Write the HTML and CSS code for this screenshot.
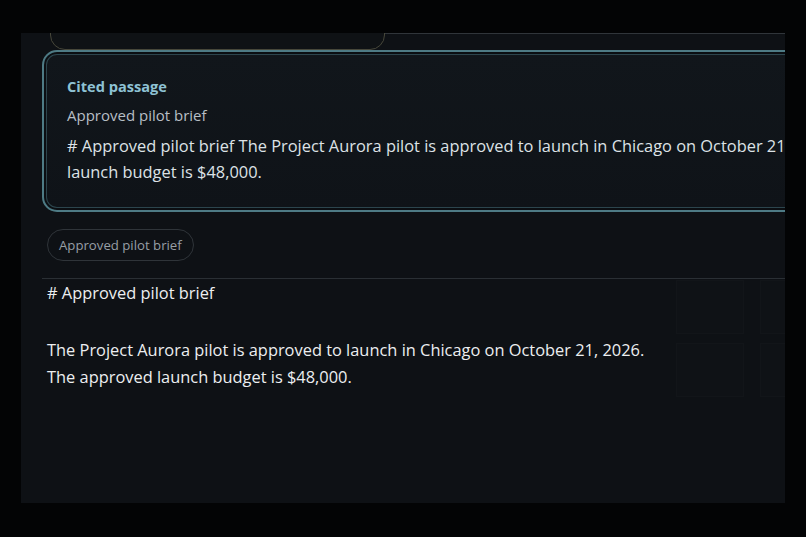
FILE: index.html
```html
<!DOCTYPE html>
<html lang="en">
<head>
  <meta charset="UTF-8" />
  <meta name="viewport" content="width=device-width, initial-scale=1.0"/>
  <title>Cited passage</title>
  <link rel="stylesheet" href="styles.css">
</head>
<body>

  <div class="panel">
    <div class="bg-tiles">
      <span></span><span></span><span></span><span></span>
    </div>

    <!-- previous message, scrolled mostly out of view -->
    <div class="top-row">
      <div class="prev-card"></div>
      <div class="prev-rule"></div>
    </div>

    <!-- Cited passage -->
    <div class="cite-card">
      <div class="cite-label">Cited passage</div>
      <div class="cite-source">Approved pilot brief</div>
      <p class="cite-text"># Approved pilot brief The Project Aurora pilot is approved to launch in Chicago on October 21, 2026. The approved<br>launch budget is $48,000.</p>
    </div>

    <div class="chips">
      <span class="chip">Approved pilot brief</span>
    </div>

    <div class="doc">
      <div class="doc-title"># Approved pilot brief</div>
      <p class="doc-body">The Project Aurora pilot is approved to launch in Chicago on October 21, 2026.<br>The approved launch budget is $48,000.</p>
    </div>
  </div>

</body>
</html>
```

FILE: styles.css
```css
body {
  margin: 0;
  padding: 0;
  background: #030405;
  font-family: 'Open Sans', 'Noto Sans', sans-serif;
  height: 537px;
  overflow: hidden;
}

.panel {
  position: relative;
  margin: 33px 21px 0 21px;
  height: 470px;
  background: #0e1115;
  overflow: hidden;
  padding-left: 21px;
}

.bg-tiles {
  position: absolute;
  top: 247px;
  left: 655px;
  display: grid;
  grid-template-columns: 68px 68px;
  grid-auto-rows: 54px;
  gap: 9px 16px;
}

.bg-tiles span {
  background: #0f1216;
  border: 1px solid #121519;
}

.top-row {
  display: flex;
  height: 17px;
}

.prev-card {
  width: 333px;
  height: 60px;
  margin-top: -45px;
  margin-left: 8px;
  border: 1px solid #47473a;
  border-radius: 15px;
  background: #0f1215;
}

.prev-rule {
  flex: 1;
  border-top: 1px solid #30353a;
}

.cite-card {
  position: relative;
  width: 800px;
  border: 2px solid #4e7b85;
  border-radius: 15px;
  box-shadow: inset 0 0 0 2px #0b0e12, inset 0 0 0 3px #2c454d;
  background: linear-gradient(180deg, #11161b, #0f1318);
  padding: 24px 22px 25px 23px;
}

.cite-label {
  font-size: 14.6px;
  font-weight: 700;
  line-height: 20px;
  color: #8ec2d4;
}

.cite-source {
  margin-top: 9px;
  font-size: 15px;
  line-height: 20px;
  color: #b7bec5;
}

.cite-text {
  margin: 8px 0 0;
  font-size: 16.4px;
  line-height: 26px;
  color: #dde2e6;
  white-space: nowrap;
}

.chips {
  display: flex;
  margin: 17px 0 0 5px;
}

.chip {
  font-size: 13.2px;
  line-height: 30px;
  padding: 0 11px;
  border: 1px solid #2f3439;
  border-radius: 16px;
  color: #979ea5;
}

.doc {
  margin-top: 17px;
  border-top: 1px solid #2a2f34;
  padding-left: 5px;
  color: #eceef0;
  font-size: 16.4px;
  line-height: 27px;
}

.doc-body {
  margin: 30px 0 0;
}
```
